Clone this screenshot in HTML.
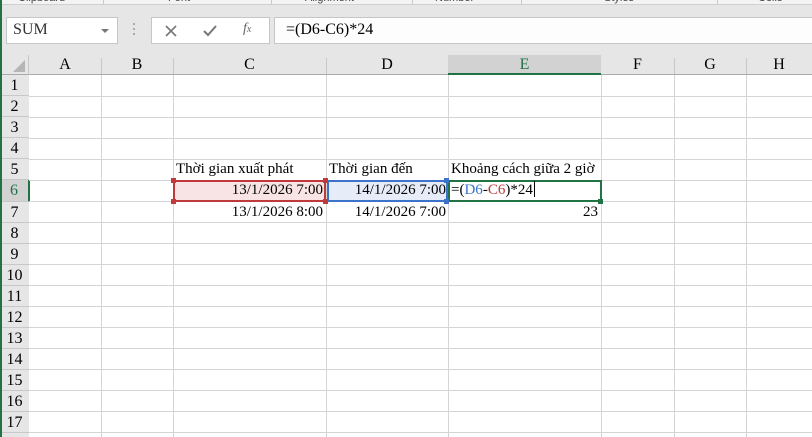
<!DOCTYPE html>
<html style="width:812px;height:437px;overflow:hidden"><head><meta charset="utf-8"><style>
*{margin:0;padding:0;box-sizing:border-box}
body{width:812px;height:437px;overflow:hidden;background:#fff;position:relative;font-family:"Liberation Serif",serif;font-size:15px;color:#000}
.a{position:absolute}
.vl{position:absolute;width:1px;background:#d4d4d4;top:75px;height:362px}
.hl{position:absolute;height:1px;background:#d4d4d4;left:29px;width:783px}
.rh{position:absolute;left:0;width:29px;height:21px;text-align:center;line-height:21px;font-size:16px;background:#e6e6e6;border-bottom:1px solid #c8c8c8}
.ch{position:absolute;top:55px;height:20px;text-align:center;line-height:20px;font-size:16px}
.c{position:absolute;height:21px;line-height:21px;white-space:nowrap}
.rib{position:absolute;top:-8px;font-family:"Liberation Sans",sans-serif;font-size:11px;color:#444}
.h{position:absolute;width:5px;height:5px}
</style></head><body>
<div class="a" style="left:0;top:0;width:812px;height:75px;background:#e6e6e6"></div>
<div class="a" style="left:0;top:0;width:812px;height:5px;background:#f3f3f3;border-bottom:1px solid #d0d0d0"></div>
<div class="rib" style="left:18px">Clipboard</div>
<div class="rib" style="left:168px">Font</div>
<div class="rib" style="left:305px">Alignment</div>
<div class="rib" style="left:435px">Number</div>
<div class="rib" style="left:604px">Styles</div>
<div class="rib" style="left:758px">Cells</div>
<div class="a" style="left:103px;top:0;width:1px;height:5px;background:#ccc"></div>
<div class="a" style="left:271px;top:0;width:1px;height:5px;background:#ccc"></div>
<div class="a" style="left:412px;top:0;width:1px;height:5px;background:#ccc"></div>
<div class="a" style="left:521px;top:0;width:1px;height:5px;background:#ccc"></div>
<div class="a" style="left:717px;top:0;width:1px;height:5px;background:#ccc"></div>
<div class="a" style="left:6px;top:17px;width:112px;height:27px;background:#fff;border:1px solid #c6c6c6"></div>
<div class="a" style="left:13px;top:21px;font-size:16px;color:#333">SUM</div>
<div class="a" style="left:101px;top:29px;width:0;height:0;border-left:4px solid transparent;border-right:4px solid transparent;border-top:4px solid #777"></div>
<div class="a" style="left:133px;top:23px;width:2px;height:2px;background:#aaa;box-shadow:0 5px 0 #aaa,0 10px 0 #aaa"></div>
<div class="a" style="left:151px;top:17px;width:119px;height:27px;background:#fff;border:1px solid #c6c6c6"></div>
<svg class="a" style="left:164px;top:24px" width="14" height="14"><path d="M2 2L12 12M12 2L2 12" stroke="#777" stroke-width="1.6"/></svg>
<svg class="a" style="left:202px;top:24px" width="16" height="14"><path d="M2 7L6 11L14 2" stroke="#777" stroke-width="2" fill="none"/></svg>
<div class="a" style="left:243px;top:21px;font-style:italic;font-size:14px;color:#666">f<span style="font-size:10px">x</span></div>
<div class="a" style="left:274px;top:17px;width:540px;height:27px;background:#fdfdfd;border:1px solid #c6c6c6"></div>
<div class="a" style="left:286px;top:21px;font-size:16px">=(D6-C6)*24</div>
<div class="a" style="left:0;top:0;width:2px;height:437px;background:#217346;z-index:5"></div>
<div class="a" style="left:0;top:55px;width:29px;height:20px;background:#e6e6e6;border-right:1px solid #c8c8c8;border-bottom:1px solid #aaa"></div>
<div class="a" style="left:13px;top:60px;width:0;height:0;border-left:12px solid transparent;border-bottom:12px solid #b5b5b5"></div>
<div class="a" style="left:29px;top:74px;width:783px;height:1px;background:#aaa"></div>
<div class="ch" style="left:29px;width:72px">A</div>
<div class="ch" style="left:101px;width:72px">B</div>
<div class="ch" style="left:173px;width:153px">C</div>
<div class="ch" style="left:326px;width:122px">D</div>
<div class="ch" style="left:448px;width:153px;background:#d2d2d2;color:#217346;border-bottom:2px solid #217346">E</div>
<div class="ch" style="left:601px;width:73px">F</div>
<div class="ch" style="left:674px;width:72px">G</div>
<div class="ch" style="left:746px;width:66px">H</div>
<div class="a" style="left:101px;top:58px;width:1px;height:16px;background:#c8c8c8"></div>
<div class="a" style="left:173px;top:58px;width:1px;height:16px;background:#c8c8c8"></div>
<div class="a" style="left:326px;top:58px;width:1px;height:16px;background:#c8c8c8"></div>
<div class="a" style="left:674px;top:58px;width:1px;height:16px;background:#c8c8c8"></div>
<div class="a" style="left:746px;top:58px;width:1px;height:16px;background:#c8c8c8"></div>
<div class="a" style="left:28px;top:75px;width:1px;height:362px;background:#aaa"></div>
<div class="rh" style="top:75px">1</div>
<div class="rh" style="top:96px">2</div>
<div class="rh" style="top:117px">3</div>
<div class="rh" style="top:138px">4</div>
<div class="rh" style="top:159px">5</div>
<div class="rh" style="top:180px;height:22px;line-height:22px;background:#d2d2d2;color:#217346;border-right:2px solid #217346;width:30px">6</div>
<div class="rh" style="top:202px">7</div>
<div class="rh" style="top:223px">8</div>
<div class="rh" style="top:244px">9</div>
<div class="rh" style="top:265px">10</div>
<div class="rh" style="top:286px">11</div>
<div class="rh" style="top:307px">12</div>
<div class="rh" style="top:328px">13</div>
<div class="rh" style="top:349px">14</div>
<div class="rh" style="top:370px">15</div>
<div class="rh" style="top:391px">16</div>
<div class="rh" style="top:412px">17</div>
<div class="rh" style="top:433px;height:4px;border:0"></div>
<div class="vl" style="left:101px"></div><div class="vl" style="left:173px"></div><div class="vl" style="left:326px"></div><div class="vl" style="left:448px"></div><div class="vl" style="left:601px"></div><div class="vl" style="left:674px"></div><div class="vl" style="left:746px"></div>
<div class="hl" style="top:96px"></div><div class="hl" style="top:117px"></div><div class="hl" style="top:138px"></div><div class="hl" style="top:159px"></div><div class="hl" style="top:180px"></div><div class="hl" style="top:201px"></div><div class="hl" style="top:222px"></div><div class="hl" style="top:243px"></div><div class="hl" style="top:264px"></div><div class="hl" style="top:285px"></div><div class="hl" style="top:306px"></div><div class="hl" style="top:327px"></div><div class="hl" style="top:348px"></div><div class="hl" style="top:369px"></div><div class="hl" style="top:390px"></div><div class="hl" style="top:411px"></div><div class="hl" style="top:432px"></div>
<div class="a" style="left:173px;top:180px;width:153px;height:22px;background:#f8e4e4;border:2px solid #c0393b"></div>
<div class="a" style="left:327px;top:180px;width:121px;height:22px;background:#e6edf8;border:2px solid #3b73c8"></div>
<div class="a" style="left:448px;top:180px;width:154px;height:22px;background:#fff;border:2px solid #217346"></div>
<div class="h" style="left:171px;top:178px;background:#c0393b"></div><div class="h" style="left:323px;top:178px;background:#c0393b"></div>
<div class="h" style="left:171px;top:199px;background:#c0393b"></div><div class="h" style="left:323px;top:199px;background:#c0393b"></div>
<div class="h" style="left:444px;top:178px;background:#3b73c8"></div><div class="h" style="left:444px;top:199px;background:#3b73c8"></div>
<div class="h" style="left:598px;top:199px;background:#217346"></div>
<div class="c" style="left:176px;top:159px">Thời gian xuất phát</div>
<div class="c" style="left:329px;top:159px">Thời gian đến</div>
<div class="c" style="left:451px;top:159px">Khoảng cách giữa 2 giờ</div>
<div class="c" style="left:175px;top:180px;width:148px;text-align:right">13/1/2026 7:00</div>
<div class="c" style="left:329px;top:180px;width:117px;text-align:right">14/1/2026 7:00</div>
<div class="c" style="left:451px;top:180px">=(<span style="color:#3b73c8">D6</span>-<span style="color:#c0393b">C6</span>)*24<span style="display:inline-block;width:1px;height:16px;background:#000;vertical-align:-3px;margin-left:1px"></span></div>
<div class="c" style="left:175px;top:202px;width:148px;text-align:right">13/1/2026 8:00</div>
<div class="c" style="left:329px;top:202px;width:117px;text-align:right">14/1/2026 7:00</div>
<div class="c" style="left:451px;top:202px;width:147px;text-align:right">23</div>
</body></html>
